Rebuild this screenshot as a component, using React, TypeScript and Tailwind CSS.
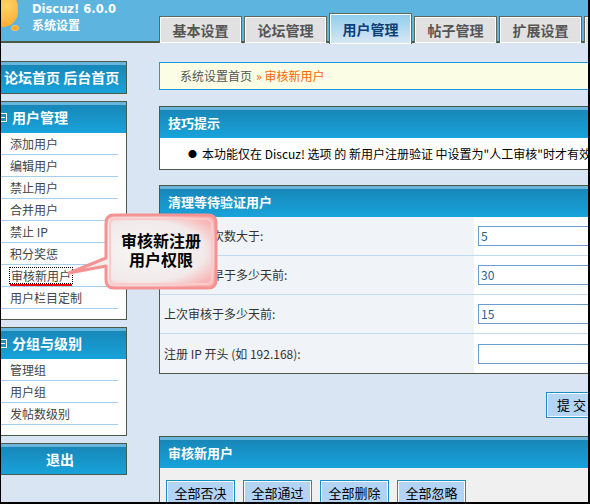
import React from "react";

const font = { fontFamily: '"Noto Sans CJK SC", "Liberation Sans", sans-serif' };

const headerBg =
  "bg-[linear-gradient(to_bottom,#69b6dc_0px,#69b6dc_3px,#1887b8_3px,#17a3db_100%)]";

const tabs = ["基本设置", "论坛管理", "用户管理", "帖子管理", "扩展设置", "其他设置"];

const userItems = ["添加用户", "编辑用户", "禁止用户", "合并用户", "禁止 IP", "积分奖惩", "审核新用户", "用户栏目定制"];
const groupItems = ["管理组", "用户组", "发帖数级别"];

const rows = [
  { label: "重新提交次数大于:", value: "5" },
  { label: "注册时间早于多少天前:", value: "30" },
  { label: "上次审核于多少天前:", value: "15" },
  { label: "注册 IP 开头 (如 192.168):", value: "" },
];

function SideBox({ title, items }: { title: string; items: string[] }) {
  return (
    <div className="border border-[#4b5949] bg-white">
      <div className={`${headerBg} h-[31px] flex items-center pl-[4px] text-white font-bold text-[14px]`}>
        <span className="inline-flex items-center justify-center w-[9px] h-[9px] border border-white mr-[5px]">
          <span className="block w-[5px] h-px bg-white" />
        </span>
        {title}
      </div>
      <div className="pb-[10px]">
        {items.map((it) => (
          <div key={it} className="h-[22px] mr-[8px] border-b border-[#a3cfec] flex items-center pl-[16px] text-[12px] text-[#444]">
            {it === "审核新用户" ? (
              <span className="relative outline-1 outline-dotted outline-black leading-[15px] px-px">
                {it}
                <span className="absolute left-0 right-0 -bottom-[3px] h-[2px] bg-[#e00]" />
              </span>
            ) : (
              it
            )}
          </div>
        ))}
      </div>
    </div>
  );
}

function MainHead({ title }: { title: string }) {
  return (
    <div className={`${headerBg} h-[31px] flex items-center pl-[8px] text-white font-bold text-[13px]`}>{title}</div>
  );
}

function Btn({ label }: { label: string }) {
  return (
    <div className="w-[69px] h-[26px] border border-[#1a8ec4] bg-[#b3d3f4] shadow-[inset_0_0_0_1px_#ffffff] flex items-center justify-center text-[13px] text-black">
      {label}
    </div>
  );
}

export default function App() {
  return (
    <div style={font} className="relative w-[590px] h-[504px] overflow-hidden bg-[#d9e5f3] border-l border-r-2 border-b-2 border-black">
      {/* header */}
      <div className="relative h-[43px] bg-[#5db5df] border-b-2 border-[#4b5a42]">
        <div className="absolute left-[-14px] top-[-8px] w-[31px] h-[35px] rounded-full bg-[radial-gradient(circle_at_60%_40%,#ffd36b,#f9a21b)]" />
        <div className="absolute left-[10px] top-[25px] w-[8px] h-[6px] rounded-full bg-[#f8a832] border border-[#f2c46a]" />
        <div className="absolute left-[31px] top-[1px] text-white font-bold text-[12px] leading-[16px]">
          <div style={{ fontFamily: '"DejaVu Sans", sans-serif' }} className="text-[11.5px]">Discuz! 6.0.0</div>
          <div>系统设置</div>
        </div>
        <div className="absolute left-[158px] bottom-[-2px] flex items-end gap-[2px]">
          {tabs.map((t) =>
            t === "用户管理" ? (
              <div key={t} className="w-[83px] h-[31px] border border-[#5c6a58] border-b-0 bg-[linear-gradient(to_bottom,#8fcdec,#dbe8f4)] shadow-[inset_0_0_0_1px_#ffffff] flex items-center justify-center text-[14px] font-bold text-[#0c3f78] mb-[-1px]">
                {t}
              </div>
            ) : (
              <div key={t} className="w-[83px] h-[27px] border border-[#5c6a58] border-b-0 bg-[#e1e1e1] shadow-[inset_0_0_0_1px_#ffffff] flex items-center justify-center text-[14px] font-bold text-[#555]">
                {t}
              </div>
            )
          )}
        </div>
      </div>

      <div className="flex">
        {/* sidebar */}
        <div className="w-[134px] -ml-[8px] shrink-0 pt-[18px] flex flex-col gap-[7px]">
          <div className={`border border-[#4b5949] ${headerBg} h-[33px] flex items-center pl-[10px] text-white font-bold text-[14px]`}>
            论坛首页 后台首页
          </div>
          <SideBox title="用户管理" items={userItems} />
          <SideBox title="分组与级别" items={groupItems} />
          <div className={`border border-[#4b5949] ${headerBg} h-[32px] flex items-center justify-center text-white font-bold text-[14px]`}>
            退出
          </div>
        </div>

        {/* main */}
        <div className="ml-[32px] w-[480px] shrink-0 pt-[19px]">
          <div className="h-[28px] border border-[#1a9ad6] bg-[#fbfee4] flex items-center pl-[20px] text-[12px] text-[#555]">
            系统设置首页<span className="text-[#ff6600] ml-[4px]">» 审核新用户</span>
          </div>

          <div className="mt-[16px] border border-[#4b5949]">
            <MainHead title="技巧提示" />
            <div className="h-[31px] bg-white flex items-center pl-[28px] text-[12px] text-black whitespace-nowrap">
              <span className="text-[9px] mr-[5px]">●</span>
              本功能仅在 Discuz! 选项 的 新用户注册验证 中设置为"人工审核"时才有效
            </div>
          </div>

          <div className="mt-[15px] border border-[#4b5949]">
            <MainHead title="清理等待验证用户" />
            {rows.map((r, i) => (
              <div key={r.label} className={`flex h-[39px] ${i < rows.length - 1 ? "border-b border-[#c3dbef]" : ""}`}>
                <div className="w-[316px] bg-[#f0f4f8] flex items-center pl-[4px] text-[12px] text-[#333]">{r.label}</div>
                <div className="flex-1 bg-white flex items-center pl-[4px]">
                  <div className="w-[160px] h-[20px] border border-[#6b9dd0] bg-white flex items-center pl-[2px] text-[12px] text-[#2a5f8f]">
                    {r.value}
                  </div>
                </div>
              </div>
            ))}
          </div>

          <div className="h-[62px] flex items-center pl-[387px]">
            <div className="w-[60px] h-[26px] border border-[#1a8ec4] bg-[#b5d5f4] shadow-[inset_0_0_0_1px_#ffffff] flex items-center pl-[10px] text-[13px] text-black">
              提 交
            </div>
          </div>

          <div className="border border-[#4b5949]">
            <MainHead title="审核新用户" />
            <div className="bg-[#f0f0f0] h-[60px] pt-[12px] pl-[6px] flex gap-[8px]">
              {["全部否决", "全部通过", "全部删除", "全部忽略"].map((b) => (
                <Btn key={b} label={b} />
              ))}
            </div>
          </div>
        </div>
      </div>

      {/* callout */}
      <svg className="absolute left-[54px] top-[210px]" width="166" height="84" viewBox="0 0 166 84">
        <defs>
          <radialGradient id="cg" cx="50%" cy="50%" r="60%">
            <stop offset="0%" stopColor="#f6f6f6" />
            <stop offset="70%" stopColor="#f2eaea" />
            <stop offset="100%" stopColor="#f9b3b3" />
          </radialGradient>
        </defs>
        <path
          d="M51 13 Q51 5 59 5 L153 5 Q161 5 161 13 L161 70 Q161 78 153 78 L59 78 Q51 78 51 70 L51 56 L14 63 L51 48 Z"
          fill="url(#cg)"
          stroke="#f59292"
          strokeWidth="3"
          strokeLinejoin="round"
        />
        <path
          d="M55 15 Q55 9 61 9 L151 9 Q157 9 157 15 L157 68 Q157 74 151 74 L61 74 Q55 74 55 68 Z"
          fill="none"
          stroke="#fbcaca"
          strokeWidth="2"
        />
      </svg>
      <div className="absolute left-[106px] top-[231px] w-[108px] text-center text-[16px] font-bold leading-[19px] text-black">
        审核新注册
        <br />
        用户权限
      </div>
    </div>
  );
}
